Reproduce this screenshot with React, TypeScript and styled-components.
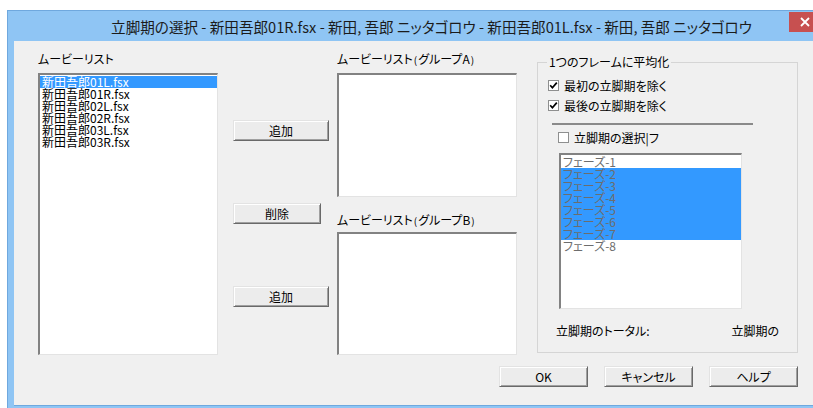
import * as React from "react";
import styled, { createGlobalStyle } from "styled-components";

const GlobalStyle = createGlobalStyle`
  html, body {
    margin: 0;
    padding: 0;
    background: #ffffff;
    overflow: hidden;
  }
  body {
    font-family: "Noto Sans CJK JP", "Liberation Sans", sans-serif;
    font-feature-settings: "palt";
    font-size: 12px;
    color: #000;
  }
`;

const Screen = styled.div`
  padding: 10px 0 0 7px;
  width: 813px;
  height: 408px;
  box-sizing: border-box;
`;

const Window = styled.div`
  position: relative;
  width: 840px;
  background: #8fc5f4;
  border-top: 1px solid #6fa8de;
  border-left: 1px solid #6fa8de;
  padding: 0 0 2px 6px;
  box-sizing: border-box;
`;

const TitleBar = styled.div`
  height: 30px;
  display: flex;
  align-items: center;
  justify-content: center;
  padding-left: 2px;
  font-size: 14.6px;
  color: #1b1b1b;
  white-space: nowrap;
`;

const CloseButton = styled.div`
  position: absolute;
  top: 1px;
  left: 781px;
  width: 45px;
  height: 20px;
  background: #c75050;
  display: flex;
  align-items: center;
  padding-left: 11px;
  box-sizing: border-box;
`;

const Client = styled.div`
  background: #f0f0f0;
  height: 365px;
  padding: 10px 0 0 24px;
  box-sizing: border-box;
  border-bottom: 1px solid #6fa8de;
`;

const MainRow = styled.div`
  display: flex;
  align-items: flex-start;
  height: 304px;
`;

const Column = styled.div<{ $width: number; $left?: number; $top?: number }>`
  display: flex;
  flex-direction: column;
  width: ${(p) => p.$width}px;
  margin-left: ${(p) => p.$left ?? 0}px;
  margin-top: ${(p) => p.$top ?? 0}px;
  flex-shrink: 0;
`;

const Label = styled.div<{ $top?: number; $bottom?: number }>`
  line-height: 16px;
  height: 16px;
  margin-top: ${(p) => p.$top ?? 0}px;
  margin-bottom: ${(p) => p.$bottom ?? 6}px;
  white-space: nowrap;
`;

const Paren = styled.span`
  font-size: 10px;
  margin: 0 1px;
`;

const ListBox = styled.div<{ $height: number; $width?: number; $left?: number; $top?: number }>`
  height: ${(p) => p.$height}px;
  width: ${(p) => (p.$width ? `${p.$width}px` : "auto")};
  margin-left: ${(p) => p.$left ?? 0}px;
  margin-top: ${(p) => p.$top ?? 0}px;
  background: #ffffff;
  border-top: 2px solid #828282;
  border-left: 2px solid #828282;
  border-right: 1px solid #e3e3e3;
  border-bottom: 1px solid #e3e3e3;
  box-sizing: border-box;
  padding-top: 1px;
  overflow: hidden;
`;

const ListItem = styled.div<{ $selected?: boolean; $dim?: boolean }>`
  height: 12px;
  line-height: 12px;
  padding-left: 2px;
  font-size: 12px;
  white-space: nowrap;
  background: ${(p) => (p.$selected ? "#3399ff" : "transparent")};
  color: ${(p) => (p.$dim ? "#6d6d6d" : p.$selected ? "#ffffff" : "#000000")};
`;

const Button = styled.button<{ $width?: number; $top?: number }>`
  width: ${(p) => p.$width ?? 96}px;
  height: 21px;
  margin-top: ${(p) => p.$top ?? 0}px;
  padding: 0;
  font-family: inherit;
  font-feature-settings: "palt";
  font-size: 12px;
  color: #000;
  background: #ececec;
  border-top: 1px solid #e3e3e3;
  border-left: 1px solid #e3e3e3;
  border-right: 1px solid #696969;
  border-bottom: 1px solid #696969;
  box-shadow: inset 1px 1px 0 #ffffff, inset -1px -1px 0 #a0a0a0;
  box-sizing: border-box;
`;

const GroupBox = styled.fieldset`
  margin: 4px 0 0 20px;
  padding: 0;
  width: 261px;
  height: 298px;
  box-sizing: border-box;
  border: 1px solid #d5d5d5;
  flex-shrink: 0;
  display: flex;
  flex-direction: column;
`;

const Legend = styled.legend`
  margin-left: 9px;
  padding: 0 2px;
  line-height: 14px;
  font-size: 12px;
  white-space: nowrap;
`;

const CheckRow = styled.label<{ $left: number; $top: number }>`
  display: flex;
  align-items: center;
  gap: 5px;
  height: 20px;
  margin-left: ${(p) => p.$left}px;
  margin-top: ${(p) => p.$top}px;
  white-space: nowrap;
`;

const Box = styled.span`
  width: 11px;
  height: 11px;
  box-sizing: border-box;
  border: 1px solid #8e8f8f;
  background: #ffffff;
  display: flex;
  align-items: center;
  justify-content: center;
`;

const Separator = styled.div`
  margin: 8px 0 0 14px;
  width: 201px;
  height: 2px;
  background: #8a8a8a;
`;

const TotalsRow = styled.div`
  display: flex;
  justify-content: space-between;
  margin: 12px 0 0 18px;
  width: 223px;
  line-height: 20px;
  white-space: nowrap;
`;

const Footer = styled.div`
  display: flex;
  gap: 16px;
  padding-left: 461px;
  margin-top: 11px;
`;

const CheckMark = () => (
  <svg width="9" height="9" viewBox="0 0 9 9">
    <polyline points="1.2,4.3 3.4,6.8 7.8,1.6" fill="none" stroke="#000" strokeWidth="1.7" />
  </svg>
);

const Check = ({ checked }: { checked: boolean }) => <Box>{checked && <CheckMark />}</Box>;

const movies = ["新田吾郎01L.fsx", "新田吾郎01R.fsx", "新田吾郎02L.fsx", "新田吾郎02R.fsx", "新田吾郎03L.fsx", "新田吾郎03R.fsx"];
const phases = [1, 2, 3, 4, 5, 6, 7, 8];

const GroupLabel = ({ name, top, bottom }: { name: string; top?: number; bottom?: number }) => (
  <Label $top={top} $bottom={bottom}>
    ムービーリスト<Paren>(</Paren>グループ{name}<Paren>)</Paren>
  </Label>
);

export default function App(): JSX.Element {
  return (
    <>
      <GlobalStyle />
      <Screen>
        <Window>
          <TitleBar>立脚期の選択 - 新田吾郎01R.fsx - 新田, 吾郎 ニッタゴロウ - 新田吾郎01L.fsx - 新田, 吾郎 ニッタゴロウ</TitleBar>
          <CloseButton>
            <svg width="10" height="10" viewBox="0 0 10 10">
              <path d="M1 1 L9 9 M9 1 L1 9" stroke="#fff" strokeWidth="1.8" />
            </svg>
          </CloseButton>
          <Client>
            <MainRow>
              <Column $width={180}>
                <Label>ムービーリスト</Label>
                <ListBox $height={282}>
                  {movies.map((m, i) => (
                    <ListItem key={m} $selected={i === 0}>{m}</ListItem>
                  ))}
                </ListBox>
              </Column>

              <Column $width={96} $left={15}>
                <Button $top={69}>追加</Button>
                <Button $top={62} $width={88}>削除</Button>
                <Button $top={62}>追加</Button>
              </Column>

              <Column $width={180} $left={8}>
                <GroupLabel name="A" />
                <ListBox $height={124} />
                <GroupLabel name="B" top={15} bottom={4} />
                <ListBox $height={123} />
              </Column>

              <GroupBox>
                <Legend>1つのフレームに平均化</Legend>
                <CheckRow $left={10} $top={6}>
                  <Check checked />
                  最初の立脚期を除く
                </CheckRow>
                <CheckRow $left={10} $top={0}>
                  <Check checked />
                  最後の立脚期を除く
                </CheckRow>
                <Separator />
                <CheckRow $left={20} $top={2}>
                  <Check checked={false} />
                  立脚期の選択|フ
                </CheckRow>
                <ListBox $height={156} $width={183} $left={21} $top={6}>
                  {phases.map((n) => (
                    <ListItem key={n} $dim $selected={n >= 2 && n <= 7}>フェーズ-{n}</ListItem>
                  ))}
                </ListBox>
                <TotalsRow>
                  <span>立脚期のトータル:</span>
                  <span>立脚期の</span>
                </TotalsRow>
              </GroupBox>
            </MainRow>

            <Footer>
              <Button $width={89}>OK</Button>
              <Button $width={89}>キャンセル</Button>
              <Button $width={89}>ヘルプ</Button>
            </Footer>
          </Client>
        </Window>
      </Screen>
    </>
  );
}
